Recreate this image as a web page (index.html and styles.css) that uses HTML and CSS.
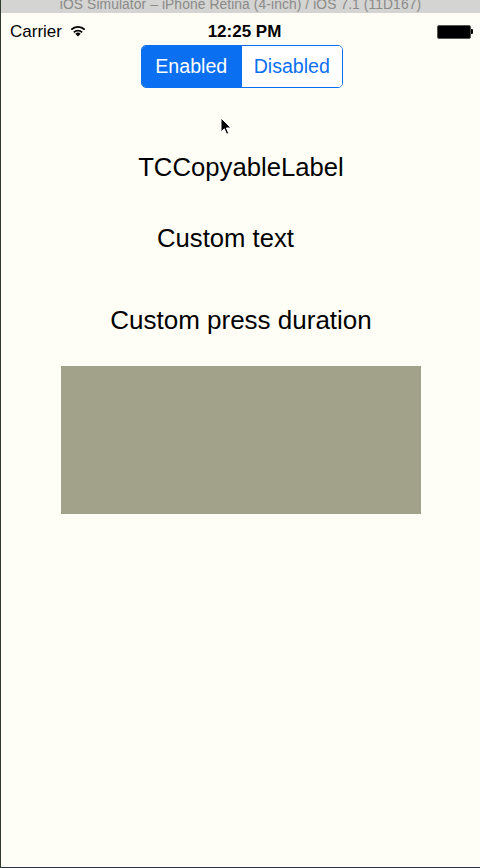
FILE: index.html
```html
<!DOCTYPE html>
<html>
<head>
<meta charset="utf-8">
<link rel="stylesheet" href="styles.css">
</head>
<body>
<div class="window">
  <div class="titlebar"><span class="title">iOS Simulator – iPhone Retina (4-inch) / iOS 7.1 (11D167)</span></div>
  <div class="screen">
    <div class="statusbar">
      <div class="sb-left">
        <span class="carrier">Carrier</span>
        <svg class="wifi" width="16" height="13" viewBox="0 0 16 13">
          <path d="M8 12.6 L5.3 9.7 A3.9 3.9 0 0 1 10.7 9.7 Z" fill="#000"/>
          <path d="M3.2 7.7 A6.8 6.8 0 0 1 12.8 7.7 L11.5 9 A4.9 4.9 0 0 0 4.5 9 Z" fill="#000"/>
          <path d="M0.6 5 A10.4 10.4 0 0 1 15.4 5 L14.1 6.3 A8.5 8.5 0 0 0 1.9 6.3 Z" fill="#000"/>
        </svg>
      </div>
      <span class="time">12:25 PM</span>
      <div class="battery"><div class="batt-body"></div><div class="batt-nub"></div></div>
    </div>
    <div class="segmented">
      <div class="seg seg-on">Enabled</div>
      <div class="seg seg-off">Disabled</div>
    </div>
    <div class="label label-main">TCCopyableLabel</div>
    <div class="label label-custom">Custom text</div>
    <div class="label label-press">Custom press duration</div>
    <div class="greybox"></div>
    <svg class="cursor" width="12" height="19" viewBox="0 0 12 19">
      <path d="M1 1 L1 15 L4.3 11.8 L6.6 17.3 L8.7 16.4 L6.4 11 L11 11 Z" fill="#000" stroke="#fff" stroke-width="1" stroke-linejoin="round"/>
    </svg>
  </div>
</div>
</body>
</html>
```
FILE: styles.css
```css
html, body {
  margin: 0;
  padding: 0;
}
body {
  width: 480px;
  height: 868px;
  overflow: hidden;
  background: #fefef6;
  font-family: "Liberation Sans", Arial, sans-serif;
}
.window {
  width: 480px;
  height: 868px;
  box-sizing: border-box;
  border-left: 1px solid #2e3a2e;
  border-bottom: 1px solid #2e3540;
  display: flex;
  flex-direction: column;
}
.titlebar {
  height: 13px;
  background: #d4d4d2;
  overflow: hidden;
  text-align: center;
}
.title {
  display: block;
  font-size: 13.8px;
  line-height: 14px;
  margin-top: -2px;
  color: #8a8a88;
  letter-spacing: 0.1px;
}
.screen {
  flex: 1;
  position: relative;
  display: flex;
  flex-direction: column;
  align-items: center;
  background: #fefef6;
}
.statusbar {
  width: 100%;
  height: 32px;
  display: flex;
  align-items: center;
  justify-content: space-between;
  box-sizing: border-box;
  padding: 0 7px 0 9px;
  position: relative;
}
.sb-left {
  display: flex;
  align-items: center;
  gap: 8px;
  width: 120px;
}
.carrier {
  font-size: 17px;
  line-height: 20px;
  color: #000;
  margin-top: 5px;
}
.wifi {
  margin-top: 3px;
}
.time {
  font-size: 17px;
  font-weight: bold;
  line-height: 20px;
  color: #000;
  margin-top: 5px;
  margin-left: 6px;
}
.battery {
  width: 120px;
  display: flex;
  justify-content: flex-end;
  align-items: center;
  margin-top: 5px;
}
.batt-body {
  width: 32px;
  height: 12px;
  background: #000;
  border: 1px solid #555;
  border-radius: 2px;
}
.batt-nub {
  width: 2px;
  height: 5px;
  background: #000;
  border-radius: 0 1px 1px 0;
}
.segmented {
  display: flex;
  width: 202px;
  height: 43px;
  box-sizing: border-box;
  border: 1px solid #0b6ff2;
  border-radius: 5px;
  overflow: hidden;
  margin-left: 2px;
}
.seg {
  flex: 1;
  display: flex;
  align-items: center;
  justify-content: center;
  font-size: 19.6px;
}
.seg-on {
  background: #0b6ff2;
  color: #fff;
}
.seg-off {
  background: #fff;
  color: #0b6ff2;
  border-left: 1px solid #0b6ff2;
}
.label {
  font-size: 25.7px;
  line-height: 30px;
  color: #000;
  white-space: nowrap;
}
.label-main {
  margin-top: 64px;
  margin-left: 1px;
}
.label-custom {
  margin-top: 41px;
  margin-right: 30px;
}
.label-press {
  margin-top: 52px;
  margin-left: 1px;
  font-size: 26px;
}
.greybox {
  margin-top: 31px;
  width: 360px;
  height: 148px;
  background: #a2a18a;
  margin-left: 1px;
}
.cursor {
  position: absolute;
  left: 219px;
  top: 104px;
}
```
